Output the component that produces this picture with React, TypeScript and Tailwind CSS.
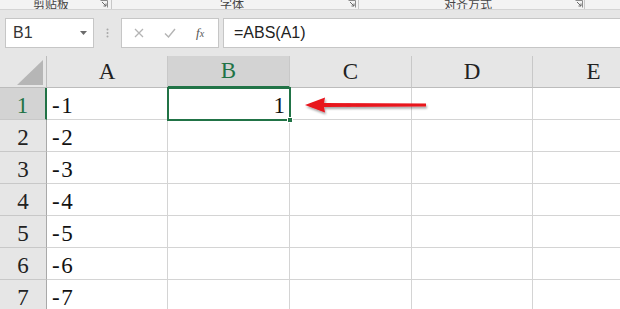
import React from 'react'

const cols = ['A', 'B', 'C', 'D', 'E']
const colW = ['w-[121px]', 'w-[122px]', 'w-[122px]', 'w-[121px]', 'w-[122px]']
const rows = [1, 2, 3, 4, 5, 6, 7]
const valsA = ['-1', '-2', '-3', '-4', '-5', '-6', '-7']

const serif = { fontFamily: '"Liberation Serif", "Times New Roman", serif' }

const Launcher = () => (
  <svg width="8" height="8" viewBox="0 0 8 8" className="shrink-0">
    <path d="M0.5 0.5 H7.5 V7.5" fill="none" stroke="#8a8a8a" strokeWidth="1" />
    <path d="M2 2 L6 6 M3.5 6 H6 V3.5" fill="none" stroke="#6a6a6a" strokeWidth="1" />
  </svg>
)

export default function App() {
  return (
    <div
      className="w-[620px] h-[309px] overflow-hidden bg-[#e6e6e6] flex flex-col"
      style={{ fontFamily: '"Liberation Sans", "Noto Sans CJK SC", sans-serif' }}
    >
      {/* ribbon group labels, cut off at the top */}
      <div className="h-[10px] shrink-0 bg-[#f3f3f3] border-b border-[#d4d4d4] flex items-end overflow-hidden text-[12px] text-[#444] leading-none">
        <div className="w-[112px] h-full flex items-end border-r border-[#c8c8c8]">
          <span className="pl-[33px] translate-y-[2px]">剪贴板</span>
          <div className="flex-1" />
          <div className="mb-[1px] mr-[3px]"><Launcher /></div>
        </div>
        <div className="w-[247px] h-full flex items-end border-r border-[#c8c8c8]">
          <span className="pl-[108px] translate-y-[2px]">字体</span>
          <div className="flex-1" />
          <div className="mb-[1px] mr-[2px]"><Launcher /></div>
        </div>
        <div className="w-[226px] h-full flex items-end border-r border-[#c8c8c8]">
          <span className="pl-[85px] translate-y-[2px]">对齐方式</span>
          <div className="flex-1" />
          <div className="mb-[1px] mr-[1px]"><Launcher /></div>
        </div>
      </div>

      {/* formula bar */}
      <div className="flex items-stretch h-[30px] mt-[8px] shrink-0">
        <div className="ml-[5px] w-[89px] bg-white border border-[#c6c6c6] flex items-center pl-[7px] pr-[6px]">
          <span className="text-[16px] text-[#333]">B1</span>
          <div className="flex-1" />
          <svg width="7" height="4" viewBox="0 0 7 4"><path d="M0 0 H7 L3.5 4 Z" fill="#6b6b6b" /></svg>
        </div>
        <div className="w-[27px] flex items-center justify-center">
          <svg width="3" height="10" viewBox="0 0 3 10">
            <circle cx="1.5" cy="1.5" r="1" fill="#a8a8a8" />
            <circle cx="1.5" cy="5" r="1" fill="#a8a8a8" />
            <circle cx="1.5" cy="8.5" r="1" fill="#a8a8a8" />
          </svg>
        </div>
        <div className="w-[98px] bg-white border border-[#c6c6c6] flex items-center">
          <svg width="10" height="10" viewBox="0 0 10 10" className="ml-[12px]">
            <path d="M1 1 L9 9 M9 1 L1 9" stroke="#b4b4b4" strokeWidth="1.3" />
          </svg>
          <svg width="12" height="10" viewBox="0 0 12 10" className="ml-[20px]">
            <path d="M1 5.5 L4.5 9 L11 1" fill="none" stroke="#b4b4b4" strokeWidth="1.4" />
          </svg>
          <span className="ml-[20px] text-[13px] italic text-[#555]" style={serif}>
            f<span className="text-[10px]">x</span>
          </span>
        </div>
        <div className="ml-[4px] flex-1 bg-white border-y border-l border-[#c6c6c6] flex items-center pl-[10px]">
          <span className="text-[16px] text-[#222]">=ABS(A1)</span>
        </div>
      </div>

      {/* sheet */}
      <div className="relative mt-[8px] flex-1" style={serif}>
        {/* column headers */}
        <div className="flex h-[32px]">
          <div className="w-[47px] shrink-0 bg-[#e6e6e6] border-r border-b border-[#bcbcbc] flex items-end justify-end pr-[3px] pb-[2px]">
            <svg width="26" height="25" viewBox="0 0 26 25"><path d="M26 0 V25 H0 Z" fill="#b6b6b6" /></svg>
          </div>
          {cols.map((c, i) => (
            <div
              key={c}
              className={`${colW[i]} shrink-0 flex items-center justify-center pt-[1px] text-[23px] ${
                c === 'B'
                  ? 'bg-[#d3d3d3] text-[#217346] border-b-2 border-b-[#217346] border-r border-r-[#c8c8c8]'
                  : 'bg-[#e6e6e6] text-[#222] border-b border-b-[#bcbcbc] border-r border-r-[#c8c8c8]'
              }`}
            >
              {c}
            </div>
          ))}
        </div>

        {rows.map((r, ri) => (
          <div key={r} className="flex h-[32px]">
            <div
              className={`w-[47px] shrink-0 flex items-center justify-center pt-[5px] text-[23px] border-b border-b-[#c8c8c8] ${
                r === 1
                  ? 'bg-[#d3d3d3] text-[#217346] border-r-2 border-r-[#217346]'
                  : 'bg-[#e6e6e6] text-[#222] border-r border-r-[#a9a9a9]'
              }`}
            >
              {r}
            </div>
            {cols.map((c, i) => (
              <div
                key={c}
                className={`${colW[i]} shrink-0 bg-white border-r border-b border-[#d4d4d4] flex items-center pt-[5px] text-[23px] text-[#111] ${
                  c === 'A' ? 'pl-[5px] tracking-[1.5px]' : 'justify-end pr-[5px]'
                }`}
              >
                {c === 'A' ? valsA[ri] : ''}
              </div>
            ))}
          </div>
        ))}

        {/* selected cell B1 */}
        <div className="absolute left-[167px] top-[31px] w-[124px] h-[34px] border-2 border-[#217346] flex items-center justify-end pt-[5px] pr-[4px] text-[23px] text-[#111]">
          1
          <div className="absolute -right-[4px] -bottom-[4px] w-[6px] h-[6px] bg-[#217346] border border-white" />
        </div>

        {/* red arrow */}
        <svg className="absolute left-[300px] top-[38px]" width="132" height="24" viewBox="0 0 132 24">
          <defs>
            <filter id="sh" x="-10%" y="-50%" width="120%" height="200%">
              <feDropShadow dx="1" dy="2" stdDeviation="1.2" floodColor="#000" floodOpacity="0.35" />
            </filter>
          </defs>
          <g filter="url(#sh)">
            <path d="M5 11 L25 3.5 L24 9 L126 9.5 L126 12.5 L24 13 L25 18.5 Z" fill="#e8141c" />
          </g>
        </svg>
      </div>
    </div>
  )
}
